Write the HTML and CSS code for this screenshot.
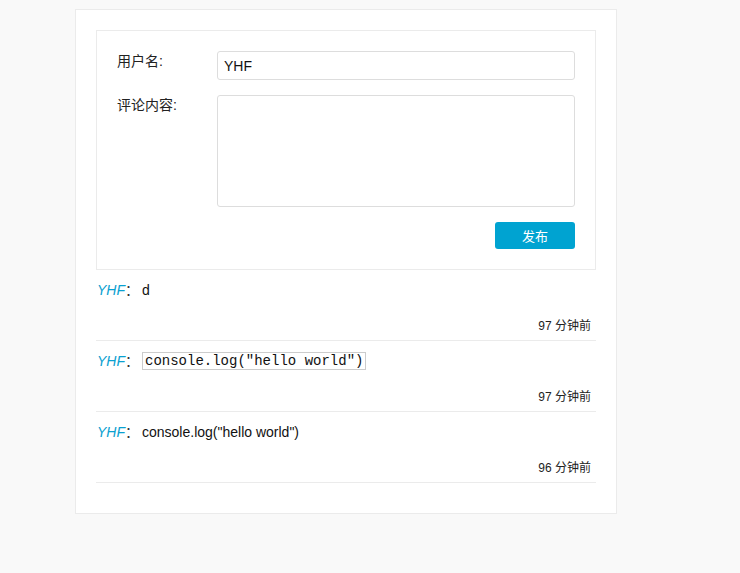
FILE: index.html
```html
<!DOCTYPE html>
<html lang="zh">
<head>
<meta charset="utf-8">
<title>评论</title>
<link rel="stylesheet" href="styles.css">
</head>
<body>
<div class="card">
  <form class="form-box">
    <div class="row">
      <label class="label">用户名:</label>
      <input class="input" type="text" value="YHF">
    </div>
    <div class="row">
      <label class="label">评论内容:</label>
      <textarea class="textarea"></textarea>
    </div>
    <div class="actions">
      <button class="btn" type="button">发布</button>
    </div>
  </form>
  <ul class="comments">
    <li class="comment">
      <div class="line"><span class="name">YHF</span><span class="colon">：</span><span class="text">d</span></div>
      <div class="time">97 分钟前</div>
    </li>
    <li class="comment">
      <div class="line"><span class="name">YHF</span><span class="colon">：</span><code class="code">console.log("hello world")</code></div>
      <div class="time">97 分钟前</div>
    </li>
    <li class="comment">
      <div class="line"><span class="name">YHF</span><span class="colon">：</span><span class="text">console.log("hello world")</span></div>
      <div class="time">96 分钟前</div>
    </li>
  </ul>
</div>
</body>
</html>
```
FILE: styles.css
```css
html, body {
  margin: 0;
  padding: 0;
  background: #f9f9f9;
}
body {
  font-family: "Liberation Sans", "Noto Sans CJK SC", sans-serif;
  font-size: 14px;
  color: #222;
  padding: 9px 0 60px 75px;
}
.card {
  width: 500px;
  background: #fff;
  border: 1px solid #ebebeb;
  padding: 20px 20px 30px;
}
.form-box {
  border: 1px solid #ebebeb;
  padding: 20px;
  margin: 0;
}
.row {
  display: flex;
  margin-bottom: 15px;
}
.label {
  width: 100px;
  flex: none;
  line-height: 20px;
  font-size: 14px;
  color: #222;
}
.input {
  box-sizing: border-box;
  width: 358px;
  height: 29px;
  border: 1px solid #ddd;
  border-radius: 3px;
  padding: 0 6px;
  font-family: "Liberation Sans", "Noto Sans CJK SC", sans-serif;
  font-size: 14px;
  color: #111;
  outline: none;
}
.textarea {
  box-sizing: border-box;
  width: 358px;
  height: 112px;
  border: 1px solid #ddd;
  border-radius: 3px;
  padding: 6px;
  resize: none;
  outline: none;
  font-family: "Liberation Sans", "Noto Sans CJK SC", sans-serif;
  font-size: 14px;
  display: block;
}
.actions {
  display: flex;
  justify-content: flex-end;
}
.btn {
  width: 80px;
  height: 27px;
  border: none;
  border-radius: 3px;
  background: #00a3d1;
  color: #fff;
  font-family: "Liberation Sans", "Noto Sans CJK SC", sans-serif;
  font-size: 13px;
  padding: 0;
  cursor: pointer;
}
.comments {
  list-style: none;
  margin: 0;
  padding: 0;
}
.comment {
  border-bottom: 1px solid #ebebeb;
  padding: 10px 5px 4px 1px;
}
.line {
  line-height: 20px;
  height: 20px;
  display: flex;
  align-items: center;
  font-size: 14px;
  color: #111;
}
.name {
  font-style: italic;
  color: #0aa0d0;
}
.colon {
  width: 17px;
  color: #333;
}
.code {
  font-family: "Liberation Mono", monospace;
  font-size: 14px;
  line-height: 16px;
  border: 1px solid #ccc;
  padding: 0 2px;
  color: #111;
}
.time {
  margin-top: 16px;
  text-align: right;
  line-height: 20px;
  font-size: 12px;
  color: #222;
}
```
